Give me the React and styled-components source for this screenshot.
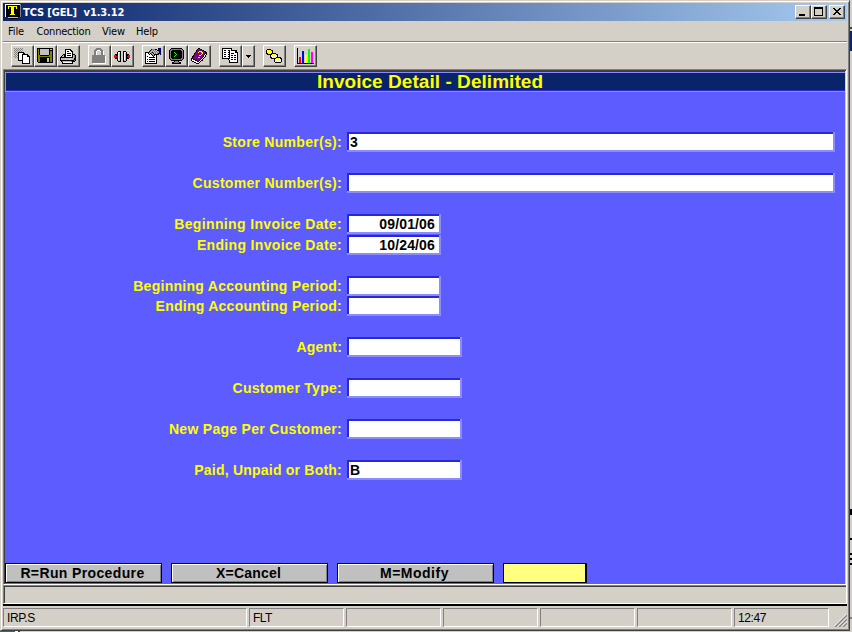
import React from 'react';
import styled, { createGlobalStyle } from 'styled-components';

const Global = createGlobalStyle`
  * { box-sizing: border-box; }
  html, body { margin: 0; padding: 0; overflow: hidden; }
`;
const Desktop = styled.div`
  width: 852px; height: 632px; display: flex; background: #d4d0c8; overflow: hidden;
  font-family: "DejaVu Sans Condensed", "DejaVu Sans", sans-serif; font-size: 11px; color: #000;
`;
const Main = styled.div`display: flex; flex-direction: column; width: 850px;`;
const Window = styled.div`
  width: 850px; height: 631px; display: flex; flex-direction: column;
  border: 1px solid #d4d0c8; border-right-color: #404040; border-bottom-color: #404040;
  box-shadow: inset 1px 1px #fff, inset -1px -1px #808080;
  padding: 2px 2px 2px 2px;
`;
const Taskbar = styled.div`
  height: 1px; background: linear-gradient(90deg, #008080 15px, #fff 15px 18px, #404040 18px 20px, #d4d0c8 20px);
`;
const TitleBar = styled.header`
  height: 18px; display: flex; align-items: center; padding: 0 2px;
  background: linear-gradient(90deg, #0a246a, #a6caf0);
`;
const TitleText = styled.h1`
  margin: 0 auto 0 2px; padding-top: 1px; color: #fff; font: bold 11px/18px "DejaVu Sans Condensed", "DejaVu Sans", sans-serif;
  letter-spacing: ${p => p.$ls || 0}px; white-space: pre;
`;
const Caption = styled.button`
  width: 16px; height: 14px; padding: 0; border: 1px solid; border-color: #fff #404040 #404040 #fff;
  box-shadow: inset -1px -1px #808080; background: #d4d0c8; display: flex;
  margin-left: ${p => (p.$gap ? 2 : 0)}px;
`;
const MenuBar = styled.nav`
  height: 20px; display: flex; padding-left: 5px;
`;
const MenuItem = styled.span`
  width: ${p => p.$w}px; line-height: 21px; letter-spacing: ${p => p.$ls}px; white-space: nowrap;
`;
const Rule = styled.div`height: 2px; background: linear-gradient(#808080 50%, #fff 50%);`;
const Toolbar = styled.div`height: 26px; padding: 2px 0 0 8px; display: flex; gap: 8px;`;
const Group = styled.div`display: flex;`;
const ToolButton = styled.button`
  width: ${p => p.$w || 23}px; height: 22px; padding: 0; background: #d4d0c8;
  border: 1px solid; border-color: #fff #404040 #404040 #fff; box-shadow: inset -1px -1px #808080; display: flex;
  svg { margin: -1px; flex: none; }
`;
const Screen = styled.main`
  height: 515px; border-top: 1px solid #808080; border-left: 1px solid #808080; border-right: 1px solid #fff;
  box-shadow: inset 1px 1px #404040, inset -1px 0 #d4d0c8;
  padding: 1px 1px 0; background: #5c5cff; background-clip: content-box;
  display: flex; flex-direction: column;
`;
const Banner = styled.h2`
  margin: 0; height: 21px; flex: none; background: #0a246a; color: #ff0; text-align: center;
  border-top: 1px solid #2828d4; border-bottom: 1px solid #8c8cff;
  box-shadow: inset 1px 1px #8c8cff, inset 0 -1px #2828d4;
  font: bold 19px/19px "Liberation Sans", Arial, sans-serif; letter-spacing: ${p => p.$ls}px; padding-left: 10px;
`;
const Form = styled.form`flex: 1; padding-top: 40px;`;
const Row = styled.div`
  display: grid; grid-template-columns: 337px auto; column-gap: 5px; height: 20px; justify-content: start;
  margin-bottom: ${p => p.$after}px;
`;
const Label = styled.label`
  text-align: right; color: #ff0; white-space: nowrap;
  font: bold 14px/20px "Liberation Sans", Arial, sans-serif; letter-spacing: ${p => p.$ls}px;
`;
const Field = styled.div`
  width: ${p => p.$w}px; height: 20px; background: #8c8cff; padding: 0 2px 2px 0;
`;
const Value = styled.div`
  height: 18px; border: solid #2828d4; border-width: 2px 0 0 2px; background: #fff;
  text-align: ${p => (p.$right ? 'right' : 'left')}; padding: 0 ${p => (p.$right ? 4 : 0)}px 0 1px;
  font: bold 14px/16px "Liberation Sans", Arial, sans-serif; letter-spacing: 0.15px;
`;
const Keys = styled.div`display: flex; gap: 9px; height: 21px;`;
const KeyButton = styled.button`
  width: 157px; height: 20px; padding: 0 2px 0 0; border: 1px solid #000; background: #c0c0c0;
  box-shadow: inset 1px 1px #fff, inset -1px -1px #808080;
  font: bold 14px/18px "Liberation Sans", Arial, sans-serif; letter-spacing: ${p => p.$ls}px; color: #000;
`;
const Prompt = styled.div`
  width: 84px; height: 20px; border: 1px solid #000; border-right-width: 2px; background: #ffff80;
`;
const Message = styled.div`
  height: 20px; border-top: 1px solid #fff; border-bottom: 1px solid #fff; border-left: 1px solid #808080; border-right: 1px solid #fff;
  box-shadow: inset 0 1px #808080, inset 1px 2px #404040;
`;
const BlackLine = styled.div`height: 2px; background: #000; flex: none;`;
const Status = styled.footer`height: 22px; display: flex; gap: 2px; padding-top: 2px;`;
const Cell = styled.div`
  width: ${p => p.$w}px; height: 19px; border: 1px solid; border-color: #808080 #fff #fff #808080;
  padding-left: 3px; font: 12px/18px "Liberation Sans", Arial, sans-serif; letter-spacing: ${p => p.$ls || 0}px;
`;
const Grip = styled.div`flex: 1; display: flex; justify-content: flex-end; align-items: flex-end; padding-bottom: 1px;`;
const Behind = styled.aside`
  width: 2px; height: 632px;
  background: linear-gradient(#d4d0c8 27px, #404040 27px 29px, #d4d0c8 29px 31px, #0a246a 31px 51px, #d4d0c8 51px 509px,
    #000 509px 515px, #d4d0c8 515px 538px, #000 538px 540px, #d4d0c8 540px 553px, #000 553px 555px, #d4d0c8 555px 558px,
    #000 558px 560px, #d4d0c8 560px 563px, #000 563px 565px, #d4d0c8 565px 617px, #808080 617px 619px, #d4d0c8 619px);
`;

const Icon = ({ w = 23, children }) => (
  <svg width={w} height="22" viewBox={`0 0 ${w} 22`} shapeRendering="crispEdges">{children}</svg>
);

const PALETTE = { k: '#000', w: '#fff', g: '#808080', s: '#c0c0c0', y: '#ffff00', o: '#808000', r: '#f00', p: '#800080', b: '#000080', n: '#00ff00' };
/* Draws a small bitmap, merging equal neighbouring pixels of a row. */
const Pixels = ({ x, y, rows }) => (
  <g transform={`translate(${x} ${y})`}>
    {rows.flatMap((row, j) => [...row.matchAll(/([^.])\1*/g)].map(m => (
      <rect key={`${j}-${m.index}`} x={m.index} y={j} width={m[0].length} height="1" fill={PALETTE[m[1]]} />
    )))}
  </g>
);

const COPY = [
  'g.g.g.g.g.......', '.g.g.g.g........', 'g.g.g.g.g.......', '.g.g.g.g........', 'g.g.kkkkkk......', '.g.gkwwwwkk.....',
  'g.g.kwwwkkkkkk..', '.g.gkwwwkwwwwkk.', 'g.g.kwwwkwwwwkkk', '.g.gkwwwkwwwwwwk', '....kwwwkwwwwwwk', '....kwwwkwwwwwwk',
  '....kkkkkwwwwwwk', '........kwwwwwwk', '........kwwwwwwk', '........kkkkkkkk'];
const SAVE = [
  'kkkkkkkkkkkkkkkk', 'kokssssssssskssk', 'kokssssssssskkkk', 'kokssssssssskook', 'kokssssssssskook', 'kokssssssssskook',
  'kokssssssssskook', 'kookkkkkkkkkoook', 'kooooooooooooook', 'kookkkkkkkkkkook', 'kookkkkkkksskook', 'kookkkkkkksskook',
  'kookkkkkkksskook', 'kookkkkkkksskook', '.kkkkkkkkkkkkkkk'];
const PRINT = [
  '.....kkkkkk.....', '.....kwwwwkk....', '.....kwkkwwkk...', '.....kwwwwwwk...', '.....kwkkkkwk...', '...kkkwwwwwwkkk.',
  '..kskkwkkkkwksgk', '.ksskkwwwwwwksgk', 'kkkkkkkkkkkkksgk', 'kssssssssssssskk', 'kssssssssyyssgkk', 'kkkkkkkkkkkkkkgk', '.kgssssssssgkkk.',
  '..kwwwwwwwwwk...', '..kkkkkkkkkkk...'];
const LOCK = [
  '....ggggg......', '...ggggggg.....', '..gggwwwggg....', '..ggw...wggw...', '..ggw....ggw...', '..ggw....ggw...', '..ggw....ggw...', 'ggggggggggggg..',
  'gggggggggggggw.', 'gggggggggggggw.', 'gggggggggggggw.', 'gggggggggggggw.', 'gggggggggggggw.', 'gggggggggggggw.', 'gggggggggggggw.', '.wwwwwwwwwwwww.'];
const PLUG = [
  '....kkk..kkk....', '...kwwk..kwwk...', '...kwsk..kwsk...', '.kkkwsk..kwskkk.', 'rrkkwsk..kwskkrr', 'rrrkwsk..kwskrrr',
  'rrkkwsk..kwskkrr', '.kkkwsk..kwskkk.', '...kwsk..kwsk...', '...kssk..kssk...', '....kkk..kkk....'];
const PROPS = [
  '.............bbb', '......kgggkk.bbb', '.....kgsgsgskkbb', '....kgsgsgsgsgbb', 'kkkkgsgkgsgsgsbb', 'kwwkskgsksgsgkbb', 'kwwwkwkgskkkkk.b',
  'kwwwwwwkgkwk....', 'kwkwwwwwkwwk....', 'kwwwkkkkkkwk....', 'kwwwwwwwwwwk....', 'kwkwkkkkkkwk....', 'kwwwwwwwwwwk....', 'kwkwkkkkkkwk....', 'kwwwwwwwwwwk....', 'kkkkkkkkkkkk....'];
const MONITOR = [
  '..kkkkkkkkkkk..', '.kgggggggggggk.', 'kggkkkkkkkkkggk', 'kgkkkkkkkkkkkgk', 'kgkkknkkkkkkkgk', 'kgkkkknkkkkkkgk', 'kgkkkkknkkkkkgk',
  'kgkkkknkkkkkkgk', 'kgkkknkkkkkkkgk', 'kgkkkkkkkkkkkgk', 'kggkkkkkkkkkggk', '.kgggggggggggk.', '..kkkkkkkkkkk..', '.....kgggk.....', '...kkgggggkk...', '...kkkkkkkkk...'];
const BOOK = [
  '.......kk.......', '......kppkk.....', '.....kpppppkk...', '.....kppyyyppkk.', '....kppyppyyppkk', '...kpppppppyppkk', '...kppppppyppkwk',
  '..kpppppyyppkwk.', '.kkpppppppppkwk.', '.kpppppyyppkwk..', 'kkppppppppkwk...', 'kwkkpppppkwk....', 'kwwwkkppkwkk....', '.kkwwwkkwk......', '...kkwwwk.......', '.....kkk........'];
const PAGES = [
  'kkkkkkkkkk......', 'kwwwwwwwwk......', 'kwkkwwkkwkkkkkk.', 'kwwwwwwkwwwwwkk.', 'kwkkwwkkwwwwwkkk', 'kwwwwwwkwkkkwwwk', 'kwkkwwkkwwwwwwwk',
  'kwwwwwwkwkkwkkwk', 'kwkkwwkkwwwwwwwk', 'kwwwwwwkwkkwkkwk', 'kkkkkkkkwwwwwwwk', '......kwwkkwkkwk', '.......kwwwwwwwk', '.......kwwwwwwwk', '.......kkkkkkkkk'];
const CHAIN = [
  '.kkkk...........', 'kwywykk.........', 'kywywyk.........', 'kwywywk.........', 'kkywykkkkk......', '.kkkkkywywkk....', '....kwywywyk....',
  '....kywywywk....', '....kkwywykkkkk.', '.....kkkkkywywkk', '........kwywywyk', '........kywywywk', '........kwywywyk', '.........kkkkkk.'];

const fields = [
  { label: 'Store Number(s):', w: 488, value: '3', after: 21, ls: 0.31 },
  { label: 'Customer Number(s):', w: 488, after: 21, ls: 0.29 },
  { label: 'Beginning Invoice Date:', w: 94, value: '09/01/06', right: true, after: 1, ls: 0.36 },
  { label: 'Ending Invoice Date:', w: 94, value: '10/24/06', right: true, after: 21, ls: 0.33 },
  { label: 'Beginning Accounting Period:', w: 94, after: 0, ls: 0.28 },
  { label: 'Ending Accounting Period:', w: 94, after: 21, ls: 0.26 },
  { label: 'Agent:', w: 115, after: 21, ls: 0.2 },
  { label: 'Customer Type:', w: 115, after: 21, ls: 0.28 },
  { label: 'New Page Per Customer:', w: 115, after: 21, ls: 0.3 },
  { label: 'Paid, Unpaid or Both:', w: 115, value: 'B', after: 0, ls: 0.22 },
];

export default function App() {
  return (
    <Desktop>
      <Global />
      <Main>
        <Window>
          <TitleBar>
            <svg width="16" height="16" viewBox="0 0 16 16" shapeRendering="crispEdges">
              <path fill="#808080" d="M0 0h16v13H0z" />
              <path fill="#fff" d="M0 0h15v1H1v12H0z" />
              <path fill="#000" d="M1 1h14v12H1zM4 14h9v1H4z" />
              <path fill="#ff0" d="M3 2h9v3h-1V3H9v7h1v1H5v-1h1V3H4v2H3z" />
              <path fill="#c0c0c0" d="M3 13h10v1H3z" />
            </svg>
            <TitleText $ls={-0.12}>TCS [GEL]  v1.3.12</TitleText>
            <Caption><svg width="14" height="12" shapeRendering="crispEdges"><path d="M3 8h6v2H3z" /></svg></Caption>
            <Caption><svg width="14" height="12" shapeRendering="crispEdges"><path fillRule="evenodd" d="M2 1h9v9H2zM3 3v6h7V3z" /></svg></Caption>
            <Caption $gap><svg width="14" height="12" shapeRendering="crispEdges"><path d="M3 2h2v1h1v1h2V3h1V2h2v1h-1v1H9v1H8v1h1v1h1v1h1v1H9V8H8V7H6v1H5v1H3V8h1V7h1V6h1V5H5V4H4V3H3z" /></svg></Caption>
          </TitleBar>
          <MenuBar>
            <MenuItem $w={28.5} $ls={-0.1}>File</MenuItem>
            <MenuItem $w={65.5} $ls={-0.2}>Connection</MenuItem>
            <MenuItem $w={34} $ls={-0.15}>View</MenuItem>
            <MenuItem $w={40} $ls={-0.15}>Help</MenuItem>
          </MenuBar>
          <Rule />
          <Toolbar>
            <Group>
              <ToolButton><Icon><Pixels x={3} y={3} rows={COPY} /></Icon></ToolButton>
              <ToolButton><Icon><Pixels x={3} y={3} rows={SAVE} /></Icon></ToolButton>
              <ToolButton><Icon><Pixels x={3} y={4} rows={PRINT} /></Icon></ToolButton>
            </Group>
            <Group>
              <ToolButton><Icon><Pixels x={4} y={3} rows={LOCK} /></Icon></ToolButton>
              <ToolButton><Icon><Pixels x={3} y={6} rows={PLUG} /></Icon></ToolButton>
            </Group>
            <Group>
              <ToolButton><Icon><Pixels x={3} y={3} rows={PROPS} /></Icon></ToolButton>
              <ToolButton><Icon><Pixels x={4} y={3} rows={MONITOR} /></Icon></ToolButton>
              <ToolButton><Icon><Pixels x={3} y={3} rows={BOOK} /></Icon></ToolButton>
            </Group>
            <Group>
              <ToolButton><Icon><Pixels x={3} y={3} rows={PAGES} /></Icon></ToolButton>
              <ToolButton $w={13}><Icon w={13}><path d="M4 10h5v1H8v1H7v1H6v-1H5v-1H4z" /></Icon></ToolButton>
            </Group>
            <Group>
              <ToolButton><Icon><Pixels x={3} y={4} rows={CHAIN} /></Icon></ToolButton>
            </Group>
            <Group>
              <ToolButton><Icon>
                <path d="M3 3h1v15h16v1H3z" />
                <path fill="#f00" d="M5 12h2v6H5z" /><path fill="#00f" d="M8 6h2v12H8z" /><path fill="#ff0" d="M11 10h2v8h-2z" />
                <path fill="#0f0" d="M14 4h2v14h-2z" /><path fill="#f0f" d="M17 7h2v11h-2z" />
              </Icon></ToolButton>
            </Group>
          </Toolbar>
          <Screen>
            <Banner $ls={0.05}>Invoice Detail - Delimited</Banner>
            <Form>
              {fields.map(f => (
                <Row key={f.label} $after={f.after}>
                  <Label $ls={f.ls}>{f.label}</Label>
                  <Field $w={f.w}><Value $right={f.right}>{f.value}</Value></Field>
                </Row>
              ))}
            </Form>
            <Keys>
              <KeyButton $ls={0.37}>R=Run Procedure</KeyButton>
              <KeyButton $ls={0.2}>X=Cancel</KeyButton>
              <KeyButton $ls={0.5}>M=Modify</KeyButton>
              <Prompt />
            </Keys>
          </Screen>
          <Message />
          <BlackLine />
          <Status>
            <Cell $w={244} $ls={-0.4}>IRP.S</Cell><Cell $w={95} $ls={-0.5}>FLT</Cell><Cell $w={95} /><Cell $w={95} /><Cell $w={95} /><Cell $w={95} /><Cell $w={95} $ls={-0.4}>12:47</Cell>
            <Grip><svg width="13" height="13" viewBox="0 0 13 13">
              <path d="M1 13 13 1M5 13l8-8M9 13l4-4" stroke="#808080" strokeWidth="1.5" />
              <path d="M0 12.5 12.5 0M4 12.5l8.500-8.500M8 12.500l4.500-4.500" stroke="#fff" strokeWidth=".8" />
            </svg></Grip>
          </Status>
        </Window>
        <Taskbar />
      </Main>
      <Behind />
    </Desktop>
  );
}
